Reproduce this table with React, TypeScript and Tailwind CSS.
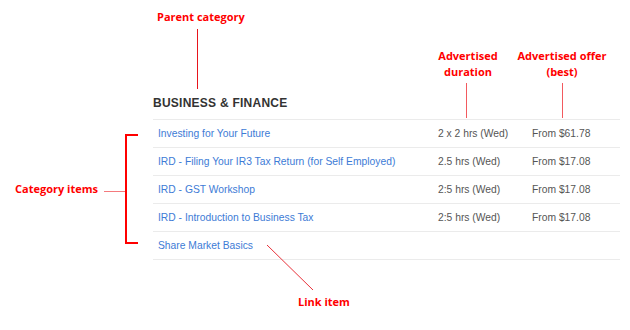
import React from "react";

const rows = [
  { name: "Investing for Your Future", dur: "2 x 2 hrs (Wed)", offer: "From $61.78" },
  { name: "IRD - Filing Your IR3 Tax Return (for Self Employed)", dur: "2.5 hrs (Wed)", offer: "From $17.08" },
  { name: "IRD - GST Workshop", dur: "2:5 hrs (Wed)", offer: "From $17.08" },
  { name: "IRD - Introduction to Business Tax", dur: "2:5 hrs (Wed)", offer: "From $17.08" },
  { name: "Share Market Basics", dur: "", offer: "" },
];

const label = "absolute font-['Open_Sans',sans-serif] font-bold text-[11px] leading-[16px] text-[#ff0000] whitespace-nowrap";

export default function App() {
  return (
    <div className="relative w-[630px] h-[330px] bg-white overflow-hidden">
      <div className="pl-[153px] pt-[95px] w-[620px]">
        <div className="border-b border-[#ebebeb] pb-[8px]">
          <div className="font-['Liberation_Sans',Arial,sans-serif] font-bold text-[12px] leading-[16px] tracking-[0.25px] text-[#333333]">
            BUSINESS &amp; FINANCE
          </div>
        </div>
        {rows.map((r, i) => (
          <div
            key={i}
            className="grid grid-cols-[280px_94px_1fr] h-[28px] items-center border-b border-[#ebebeb] font-['Liberation_Sans',Arial,sans-serif] text-[10.3px] leading-[14px]"
          >
            <div className="pl-[5px] text-[#3d7bd6] whitespace-nowrap">{r.name}</div>
            <div className="pl-[5px] text-[#555555] whitespace-nowrap">{r.dur}</div>
            <div className="pl-[5px] text-[#555555] whitespace-nowrap">{r.offer}</div>
          </div>
        ))}
      </div>

      <svg className="absolute left-0 top-0" width="630" height="330" viewBox="0 0 630 330">
        <line x1="197.5" y1="29" x2="197.5" y2="89" stroke="#e8141c" strokeWidth="1" />
        <line x1="466.5" y1="83" x2="466.5" y2="118" stroke="#f25a5f" strokeWidth="1" />
        <line x1="562.5" y1="83" x2="562.5" y2="118" stroke="#f25a5f" strokeWidth="1" />
        <line x1="104" y1="191.5" x2="126" y2="191.5" stroke="#f47a7d" strokeWidth="1" />
        <path d="M138 135 H126 V243 H138" fill="none" stroke="#ff0000" strokeWidth="2" />
        <line x1="267" y1="245" x2="313" y2="290" stroke="#e8323a" strokeWidth="1" />
      </svg>

      <div className={`${label} left-[157px] top-[9px]`}>Parent category</div>
      <div className={`${label} left-[428px] top-[48px] w-[80px] text-center`}>
        Advertised
        <br />
        duration
      </div>
      <div className={`${label} left-[512px] top-[48px] w-[100px] text-center`}>
        Advertised offer
        <br />
        (best)
      </div>
      <div className={`${label} left-[15px] top-[181px]`}>Category items</div>
      <div className={`${label} left-[298px] top-[294px]`}>Link item</div>
    </div>
  );
}
